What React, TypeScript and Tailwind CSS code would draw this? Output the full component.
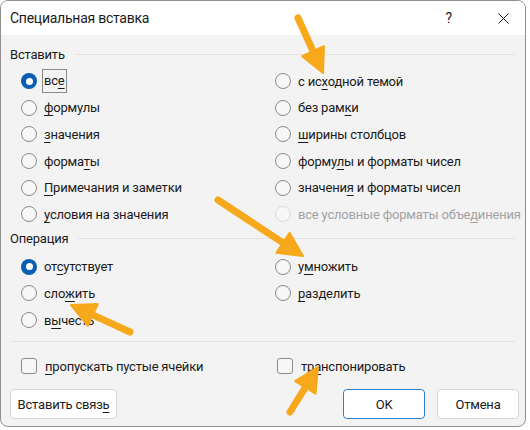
import type { ReactNode } from "react";

type Opt = { text: string; u?: number; checked?: boolean; disabled?: boolean; focus?: boolean };

const Label = ({ text, u }: { text: string; u?: number }) => {
  if (u === undefined) return <>{text}</>;
  return (
    <>
      {text.slice(0, u)}
      <span className="underline decoration-1 underline-offset-[3px]">{text[u]}</span>
      {text.slice(u + 1)}
    </>
  );
};

const Radio = ({ checked, disabled }: { checked?: boolean; disabled?: boolean }) =>
  checked ? (
    <span className="flex h-[16px] w-[16px] shrink-0 items-center justify-center rounded-full bg-[#0a5fb4]">
      <span className="h-[7px] w-[7px] rounded-full bg-white" />
    </span>
  ) : (
    <span
      className={
        disabled
          ? "h-[16px] w-[16px] shrink-0 rounded-full border border-[#dadada] bg-[#f7f7f7]"
          : "h-[16px] w-[16px] shrink-0 rounded-full border border-[#8a8a8a] bg-[#f7f7f7]"
      }
    />
  );

const RadioRow = ({ o }: { o: Opt }) => (
  <div className="flex h-[26.6px] items-center whitespace-nowrap pl-[11px]">
    <Radio checked={o.checked} disabled={o.disabled} />
    <span
      className={
        (o.disabled ? "text-[#a3a3a3] " : "text-[#1b1b1b] ") +
        (o.focus ? "ml-[6px] px-[1px] leading-[22px] outline outline-1 outline-[#8a8a8a]" : "ml-[7px]")
      }
    >
      <Label text={o.text} u={o.u} />
    </span>
  </div>
);

const Check = ({ children }: { children: ReactNode }) => (
  <div className="flex items-center whitespace-nowrap">
    <span className="h-[16px] w-[16px] shrink-0 rounded-[3px] border border-[#8a8a8a] bg-[#f7f7f7]" />
    <span className="ml-[8px] text-[#1b1b1b]">{children}</span>
  </div>
);

const Header = ({ title }: { title: string }) => (
  <div className="flex h-[20px] items-center pr-[8px]">
    <span className="text-[#1b1b1b]">{title}</span>
    <span className="ml-[10px] h-px flex-1 bg-[#e3e3e3]" />
  </div>
);

const Arrow = ({ x1, y1, x2, y2 }: { x1: number; y1: number; x2: number; y2: number }) => {
  const dx = x2 - x1;
  const dy = y2 - y1;
  const len = Math.hypot(dx, dy);
  const ux = dx / len;
  const uy = dy / len;
  const hl = 24;
  const hw = 12;
  const bx = x2 - ux * hl;
  const by = y2 - uy * hl;
  const pts = `${x2},${y2} ${bx - uy * hw},${by + ux * hw} ${bx + uy * hw},${by - ux * hw}`;
  return (
    <g>
      <line x1={x1} y1={y1} x2={bx + ux * 2} y2={by + uy * 2} stroke="#f7a81b" strokeWidth={7} strokeLinecap="round" />
      <polygon points={pts} fill="#f7a81b" stroke="#f7a81b" strokeWidth={2} strokeLinejoin="round" />
    </g>
  );
};

const pasteLeft: Opt[] = [
  { text: "все", u: 2, checked: true, focus: true },
  { text: "формулы", u: 0 },
  { text: "значения", u: 0 },
  { text: "форматы", u: 5 },
  { text: "Примечания и заметки", u: 0 },
  { text: "условия на значения", u: 0 },
];

const pasteRight: Opt[] = [
  { text: "с исходной темой", u: 4 },
  { text: "без рамки", u: 7 },
  { text: "ширины столбцов", u: 0 },
  { text: "формулы и форматы чисел", u: 5 },
  { text: "значения и форматы чисел", u: 7 },
  { text: "все условные форматы объединения", disabled: true, u: 25 },
];

const opLeft: Opt[] = [
  { text: "отсутствует", u: 2, checked: true },
  { text: "сложить", u: 3 },
  { text: "вычесть", u: 1 },
];

const opRight: Opt[] = [
  { text: "умножить", u: 1 },
  { text: "разделить", u: 0 },
];

export default function App() {
  return (
    <div
      className="relative h-[430px] w-[530px] bg-white text-[13px] leading-none tracking-[-0.2px]"
      style={{ fontFamily: 'Roboto, "Noto Sans", sans-serif' }}
    >
      <div className="flex h-[427px] w-[526px] flex-col overflow-hidden rounded-[8px] border border-[#8f8f8f] bg-[#f3f3f3]">
        <div className="flex h-[34px] shrink-0 items-center bg-white pl-[9px] pr-[16px]">
          <span className="text-[14px] tracking-[-0.25px] text-[#1b1b1b]">Специальная вставка</span>
          <span className="ml-auto text-[14px] text-[#1b1b1b]">?</span>
          <svg className="ml-[46px]" width="11" height="11" viewBox="0 0 11 11">
            <path d="M0.5 0.5 L10.5 10.5 M10.5 0.5 L0.5 10.5" stroke="#1b1b1b" strokeWidth="1" />
          </svg>
        </div>

        <div className="flex flex-col pl-[9px] pr-[2px]">
          <div className="mt-[9px]">
            <Header title="Вставить" />
          </div>
          <div className="mt-[4px] grid grid-cols-[254px_1fr]">
            <div className="flex flex-col">
              {pasteLeft.map((o) => (
                <RadioRow key={o.text} o={o} />
              ))}
            </div>
            <div className="flex flex-col">
              {pasteRight.map((o) => (
                <RadioRow key={o.text} o={o} />
              ))}
            </div>
          </div>

          <div className="mt-[1px]">
            <Header title="Операция" />
          </div>
          <div className="mt-[5px] grid grid-cols-[254px_1fr]">
            <div className="flex flex-col">
              {opLeft.map((o) => (
                <RadioRow key={o.text} o={o} />
              ))}
            </div>
            <div className="flex flex-col">
              {opRight.map((o) => (
                <RadioRow key={o.text} o={o} />
              ))}
            </div>
          </div>

          <div className="mr-[8px] mt-[8px] h-px bg-[#e3e3e3]" />

          <div className="mt-[16px] grid h-[16px] grid-cols-[256px_1fr] pl-[11px]">
            <Check>
              <Label text="пропускать пустые ячейки" u={0} />
            </Check>
            <Check>
              <Label text="транспонировать" u={2} />
            </Check>
          </div>

          <div className="mt-[15px] flex h-[30px] pr-[4px]">
            <button className="w-[107px] rounded-[4px] border border-[#d4d4d4] bg-white text-[#1b1b1b]">
              <Label text="Вставить связь" u={13} />
            </button>
            <button className="ml-auto w-[82px] rounded-[4px] border border-[#2f7fd0] bg-white text-[#1b1b1b]">
              OK
            </button>
            <button className="ml-[12px] w-[82px] rounded-[4px] border border-[#d4d4d4] bg-white text-[#1b1b1b]">
              Отмена
            </button>
          </div>
        </div>
      </div>

      <svg className="pointer-events-none absolute inset-0" width="530" height="430" viewBox="0 0 530 430">
        <Arrow x1={298} y1={18} x2={323} y2={73} />
        <Arrow x1={218} y1={200} x2={303} y2={256} />
        <Arrow x1={130} y1={332} x2={71} y2={305} />
        <Arrow x1={290} y1={412} x2={318} y2={367} />
      </svg>
    </div>
  );
}
